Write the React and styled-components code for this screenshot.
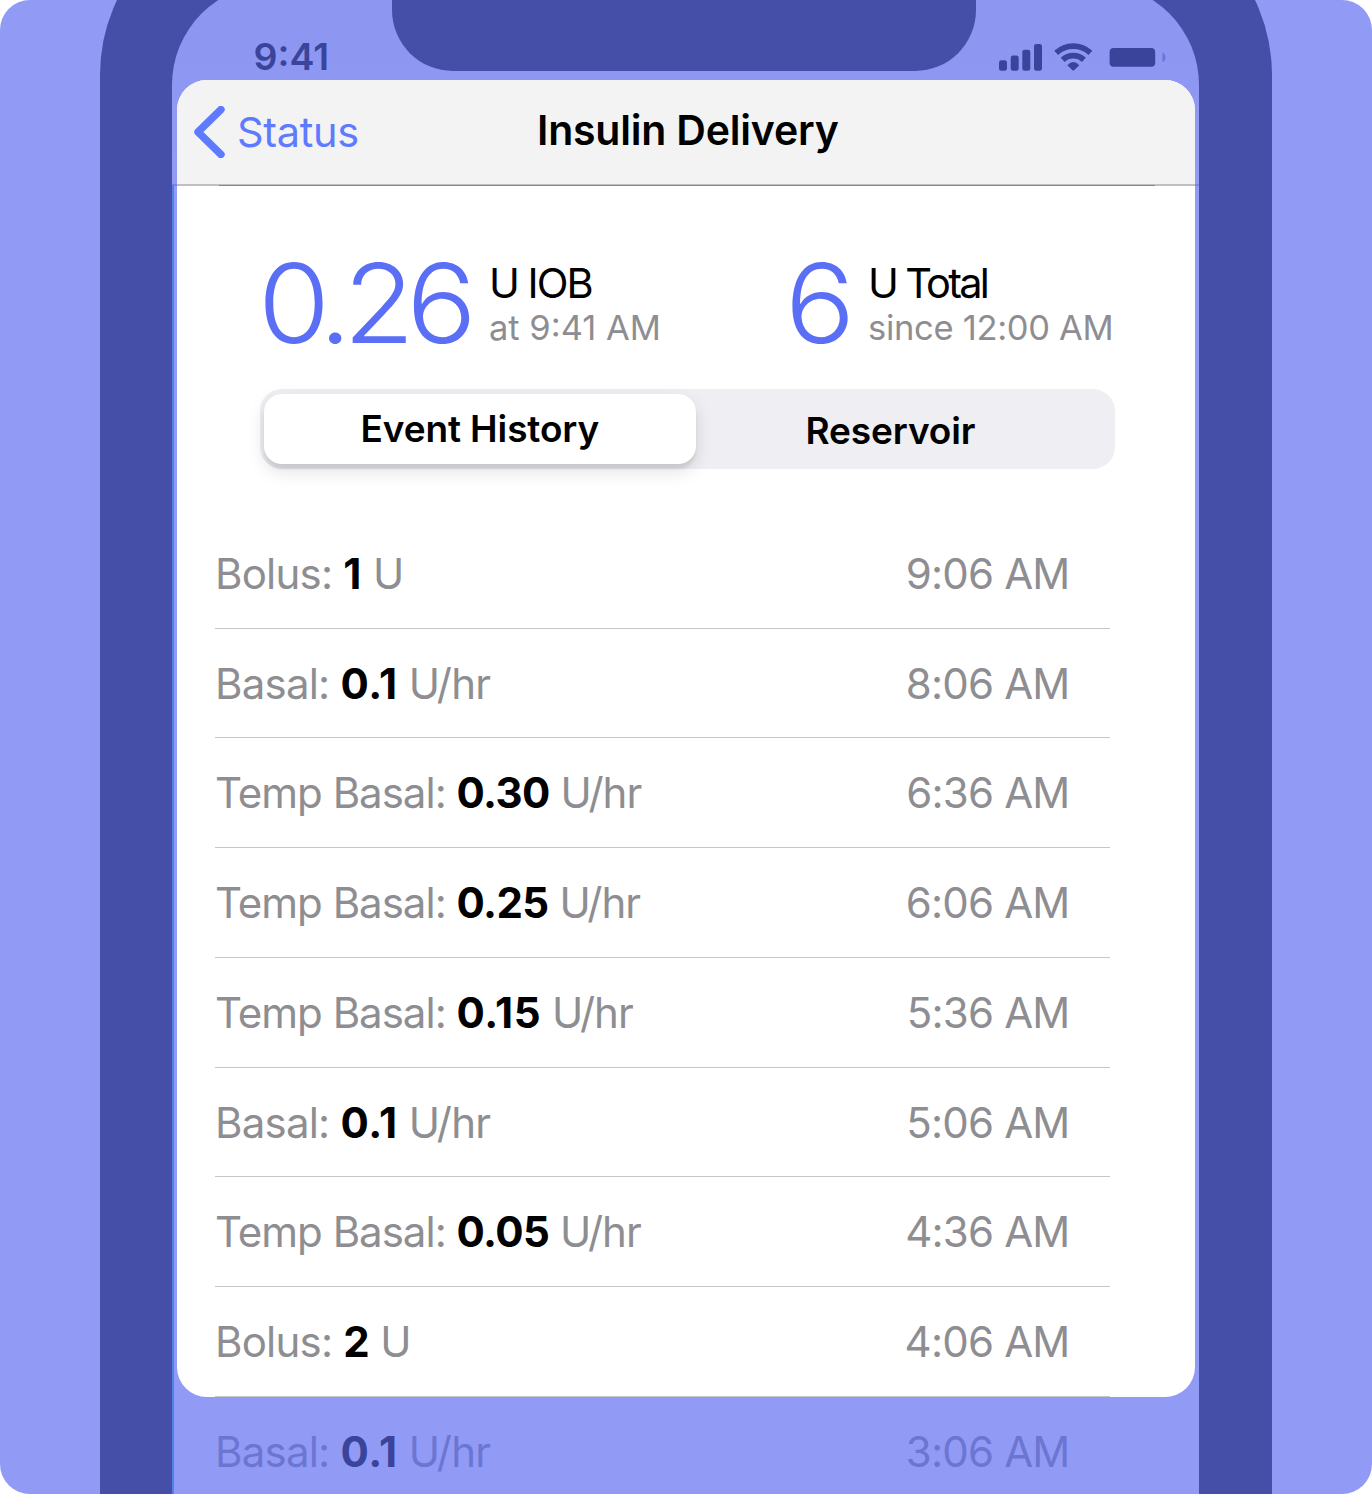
import React from 'react';
import styled, { createGlobalStyle } from 'styled-components';

const Global = createGlobalStyle`
  * { box-sizing: border-box; }
  body {
    margin: 0;
    background: #fff;
    font-family: Inter, "Liberation Sans", sans-serif;
  }
`;

const Backdrop = styled.main`
  width: 1372px;
  height: 1494px;
  overflow: hidden;
  border-radius: 30px;
  background: #919bf6;
`;

const Phone = styled.div`
  width: 1172px;
  height: 1593px;
  margin: -99px 0 0 100px;
  padding: 83px 73px 0 72px;
  border-radius: 174px 174px 0 0;
  background: #454fa8;
`;

const Screen = styled.div`
  height: 1510px;
  padding-top: 16px;
  border-radius: 101px 101px 0 0;
  background:
    linear-gradient(#5080ea, #5080ea) 0 201px / 2px 100% no-repeat,
    linear-gradient(#7d86d3, #7d86d3) 0 200px / 100% 2px no-repeat,
    linear-gradient(#8d97f1 0, #8d97f1 60px, #919bf6 200px);
`;

const StatusBar = styled.div`
  display: grid;
  grid-template-columns: 220px 584px 223px;
  height: 80px;
`;

const Clock = styled.div`
  padding: 34px 0 0 81.5px;
  font-size: 37.5px;
  line-height: 46px;
  font-weight: 600;
  color: #3a449b;
`;

const Notch = styled.div`
  height: 70.5px;
  border-radius: 0 0 61px 61px;
  background: #454fa8;
`;

const Indicators = styled.svg`
  display: block;
  width: 170px;
  height: 30px;
  margin: 42px 0 0 22px;
  fill: #3a449b;
`;

const Card = styled.section`
  width: 1018px;
  height: 1316.5px;
  margin-left: 5px;
  overflow: hidden;
  border-radius: 30px;
  background: #fff;
`;

const Header = styled.header`
  display: grid;
  grid-template-columns: 344px 1fr;
  height: 104px;
  background: #f3f3f3;
  padding-left: 16px;
`;

const HeaderRule = styled.div`
  height: 2px;
  background:
    linear-gradient(#c0c0c2, #c0c0c2) 0 0 / 100% 1px no-repeat,
    linear-gradient(90deg, #c0c0c2 42px, #88888a 42px, #88888a 978px, #c0c0c2 978px);
`;

const Back = styled.div`
  display: flex;
  gap: 12px;
  padding-top: 26px;
  font-size: 41.5px;
  line-height: 52px;
  letter-spacing: -0.3px;
  color: #5e7bff;
`;

const Chevron = styled.svg`
  width: 32px;
  height: 52px;
  fill: none;
  stroke: #5e7bff;
`;

const Title = styled.h1`
  margin: 0;
  padding-top: 24px;
  font-size: 41px;
  line-height: 52px;
  font-weight: 600;
  letter-spacing: -0.2px;
  white-space: nowrap;
`;

const Summary = styled.div`
  display: flex;
  height: 100px;
  margin: 67px 0 0 81px;
`;

const Metric = styled.div`
  display: flex;
  width: ${(p) => p.$width}px;
`;

const Amount = styled.div`
  width: ${(p) => p.$width}px;
  font-size: 110px;
  line-height: 100px;
  font-weight: 300;
  letter-spacing: -7.9px;
  color: #5a6ff5;
  transform: scaleX(1.06);
  transform-origin: left;
`;

const Unit = styled.div`
  padding-top: 6px;
  font-size: 41.5px;
  line-height: 48px;
  letter-spacing: ${(p) => p.$track}px;
  white-space: nowrap;
`;

const Since = styled.div`
  font-size: 34.5px;
  line-height: 42px;
  letter-spacing: ${(p) => p.$track}px;
  color: #8e8e92;
  white-space: nowrap;
`;

const Segments = styled.div`
  display: grid;
  grid-template-columns: 432px 1fr;
  width: 855px;
  height: 80px;
  margin: 36px 0 0 83px;
  padding: 5px 4px;
  border-radius: 22px;
  background: #eeeef3;
`;

const Segment = styled.div`
  height: 70px;
  padding-left: ${(p) => p.$inset}px;
  padding-top: ${(p) => (p.$active ? 0 : 2)}px;
  border-radius: 18px;
  background: ${(p) => (p.$active ? '#fff' : 'transparent')};
  box-shadow: ${(p) => (p.$active ? '0 7px 18px rgba(0,0,0,.12), 0 5px 3px rgba(0,0,0,.07)' : 'none')};
  font-size: 37px;
  line-height: 70px;
  font-weight: 600;
  letter-spacing: -0.12px;
  white-space: nowrap;
`;

const List = styled.ul`
  list-style: none;
  margin: ${(p) => p.$top}px 0 0 ${(p) => p.$left}px;
  padding: 0;
  width: 895.5px;
`;

const Row = styled.li`
  display: flex;
  justify-content: space-between;
  height: 109.72px;
  padding: 0 40.5px 0 0.5px;
  border-bottom: 1px solid ${(p) => (p.$dimmed ? 'transparent' : '#c6c6c9')};
  font-size: 42px;
  line-height: 110.5px;
  white-space: pre;
  color: ${(p) => (p.$dimmed ? '#6c76d2' : '#8e8e92')};
`;

const Label = styled.span`
  letter-spacing: ${(p) => p.$track}px;
`;

const Value = styled.strong`
  font-weight: 700;
  letter-spacing: ${(p) => p.$track}px;
  color: ${(p) => (p.$dimmed ? '#3a449b' : '#000')};
`;

const Time = styled.span`
  letter-spacing: -0.8px;
`;

const events = [
  ['Bolus', '1', 'U', '9:06 AM'],
  ['Basal', '0.1', 'U/hr', '8:06 AM'],
  ['Temp Basal', '0.30', 'U/hr', '6:36 AM'],
  ['Temp Basal', '0.25', 'U/hr', '6:06 AM'],
  ['Temp Basal', '0.15', 'U/hr', '5:36 AM'],
  ['Basal', '0.1', 'U/hr', '5:06 AM'],
  ['Temp Basal', '0.05', 'U/hr', '4:36 AM'],
  ['Bolus', '2', 'U', '4:06 AM'],
];

function EventRow({ event, dimmed }) {
  const [kind, value, unit, time] = event;
  return (
    <Row $dimmed={dimmed}>
      <Label $track={kind.startsWith('Temp') ? -1 : -0.78}>
        {kind}:{' '}
        <Value $dimmed={dimmed} $track={value.includes('1') ? 0.6 : -0.6}>
          {value}
        </Value>{' '}
        {unit}
      </Label>
      <Time>{time}</Time>
    </Row>
  );
}

function StatusIcons() {
  return (
    <Indicators viewBox="998 42 170 30">
      <rect x="999" y="60.3" width="8" height="10.5" rx="2.4" />
      <rect x="1010.7" y="55.5" width="8" height="15.3" rx="2.4" />
      <rect x="1022.3" y="49.8" width="8" height="21" rx="2.4" />
      <rect x="1034" y="44" width="8" height="26.8" rx="2.4" />
      <g fill="none" stroke="#3a449b" strokeWidth="5.8">
        <path d="M1056.200 52.800A25 25 0 0 1 1090.400 52.800" />
        <path d="M1062.700 59.800A15.500 15.500 0 0 1 1083.900 59.800" />
      </g>
      <path d="M1067.300 65.2Q1073.300 59 1079.300 65.2L1074.100 70.200Q1073.300 71 1072.500 70.200Z" />
      <rect x="1109.600" y="48" width="45.600" height="18.800" rx="4" />
      <path d="M1162.500 52.500Q1165.500 54 1165.500 57.300T1162.500 62.200Z" opacity=".4" />
    </Indicators>
  );
}

export default function App() {
  return (
    <>
      <Global />
      <Backdrop>
        <Phone>
          <Screen>
            <StatusBar>
              <Clock>9:41</Clock>
              <Notch />
              <StatusIcons />
            </StatusBar>
            <Card>
              <Header>
                <Back>
                  <Chevron viewBox="0 0 32 52">
                    <path d="M28 3.500L5 26L28 48.500" strokeWidth="7.4" strokeLinecap="round" strokeLinejoin="round" />
                  </Chevron>
                  Status
                </Back>
                <Title>Insulin Delivery</Title>
              </Header>
              <HeaderRule />
              <Summary>
                <Metric $width={527}>
                  <Amount $width={231}>0.26</Amount>
                  <div>
                    <Unit $track={-2}>U IOB</Unit>
                    <Since $track={0}>at 9:41 AM</Since>
                  </div>
                </Metric>
                <Metric $width={330}>
                  <Amount $width={83}>6</Amount>
                  <div>
                    <Unit $track={-2.7}>U Total</Unit>
                    <Since $track={-0.3}>since 12:00 AM</Since>
                  </div>
                </Metric>
              </Summary>
              <Segments>
                <Segment $active $inset={96.5}>Event History</Segment>
                <Segment $inset={109.5}>Reservoir</Segment>
              </Segments>
              <List $top={50} $left={37.5}>
                {events.map((event) => (
                  <EventRow key={event[3]} event={event} />
                ))}
              </List>
            </Card>
            <List $top={0} $left={42.5}>
              <EventRow event={['Basal', '0.1', 'U/hr', '3:06 AM']} dimmed />
            </List>
          </Screen>
        </Phone>
      </Backdrop>
    </>
  );
}
